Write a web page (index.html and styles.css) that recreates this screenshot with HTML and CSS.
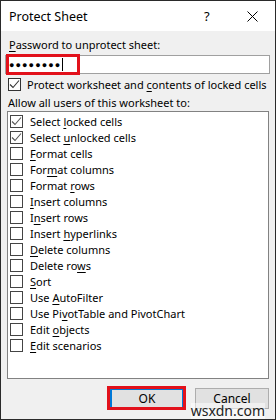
FILE: index.html
```html
<!DOCTYPE html>
<html lang="en">
<head>
    <meta charset="UTF-8">
    <title>Protect Sheet</title>
    <link rel="stylesheet" href="styles.css">
</head>
<body>
    <div class="dialog">
        <div class="titlebar">
            <span class="title">Protect Sheet</span>
            <span class="help">?</span>
            <svg class="close" width="11" height="11" viewBox="0 0 11 11">
                <path d="M0.5 0.5 L10.5 10.5 M10.5 0.5 L0.5 10.5" stroke="#000" stroke-width="1" fill="none"/>
            </svg>
        </div>

        <div class="content">
            <div class="label"><u>P</u>assword to unprotect sheet:</div>
            <div class="password">
                <span class="dots">●●●●●●●●</span><span class="caret"></span>
                <div class="mark mark-pass"></div>
            </div>

            <div class="check-row">
                <span class="box checked">
                    <svg width="11" height="11" viewBox="0 0 11 11"><path d="M1 5.5 L4 8.5 L10 1.5" stroke="#333" stroke-width="1.1" fill="none"/></svg>
                </span>
                <span>Protect worksheet and <u>c</u>ontents of locked cells</span>
            </div>

            <div class="label allow">Allow all users of this worksheet to:</div>

            <div class="list">
                <div class="check-row"><span class="box checked"><svg width="11" height="11" viewBox="0 0 11 11"><path d="M1 5.5 L4 8.5 L10 1.5" stroke="#555" stroke-width="1.1" fill="none"/></svg></span><span>Select <u>l</u>ocked cells</span></div>
                <div class="check-row"><span class="box checked"><svg width="11" height="11" viewBox="0 0 11 11"><path d="M1 5.5 L4 8.5 L10 1.5" stroke="#555" stroke-width="1.1" fill="none"/></svg></span><span>Select <u>u</u>nlocked cells</span></div>
                <div class="check-row"><span class="box"></span><span><u>F</u>ormat cells</span></div>
                <div class="check-row"><span class="box"></span><span>For<u>m</u>at columns</span></div>
                <div class="check-row"><span class="box"></span><span>Format <u>r</u>ows</span></div>
                <div class="check-row"><span class="box"></span><span><u>I</u>nsert columns</span></div>
                <div class="check-row"><span class="box"></span><span>I<u>n</u>sert rows</span></div>
                <div class="check-row"><span class="box"></span><span>Insert <u>h</u>yperlinks</span></div>
                <div class="check-row"><span class="box"></span><span><u>D</u>elete columns</span></div>
                <div class="check-row"><span class="box"></span><span>Delete ro<u>w</u>s</span></div>
                <div class="check-row"><span class="box"></span><span><u>S</u>ort</span></div>
                <div class="check-row"><span class="box"></span><span>Use <u>A</u>utoFilter</span></div>
                <div class="check-row"><span class="box"></span><span>Use Pi<u>v</u>otTable and PivotChart</span></div>
                <div class="check-row"><span class="box"></span><span>Edit <u>o</u>bjects</span></div>
                <div class="check-row"><span class="box"></span><span><u>E</u>dit scenarios</span></div>
            </div>

            <div class="buttons">
                <div class="btn-wrap">
                    <button class="btn default">OK</button>
                    <div class="mark mark-ok"></div>
                </div>
                <button class="btn">Cancel</button>
            </div>
        </div>
        <div class="watermark">wsxdn.com</div>
    </div>
</body>
</html>
```

FILE: styles.css
```css
body {
    margin: 0;
    font-family: "Noto Sans", "Open Sans", sans-serif;
    font-size: 11px;
    color: #000;
}
u {
    text-decoration-thickness: 1px;
    text-underline-offset: 2px;
}
.dialog {
    position: relative;
    width: 276px;
    height: 420px;
    box-sizing: border-box;
    border: 1px solid #2a2a2a;
    background: #f0f0f0;
    display: flex;
    flex-direction: column;
}
.titlebar {
    height: 30px;
    background: #fff;
    display: flex;
    align-items: center;
    padding-left: 8px;
}
.title {
    flex: 1;
    font-size: 12.5px;
}
.help {
    width: 20px;
    font-size: 13px;
    margin-right: 23px;
}
.close {
    margin-right: 17px;
}
.content {
    padding: 0 6px;
    display: flex;
    flex-direction: column;
}
.label {
    height: 16px;
    line-height: 16px;
    margin-top: 6px;
    padding-left: 2px;
}
.password {
    position: relative;
    margin: 2px -1px 0 -2px;
    height: 17px;
    border: 1px solid #a0a0a0;
    background: #fff;
    display: flex;
    align-items: center;
    padding-left: 3px;
}
.dots {
    font-size: 9px;
    letter-spacing: 1.1px;
}
.caret {
    width: 1px;
    height: 13px;
    background: #000;
    margin-left: 1px;
}
.mark {
    position: absolute;
    border: 3px solid #e2111b;
    box-sizing: border-box;
}
.mark-pass {
    left: 0;
    top: -2px;
    width: 74px;
    height: 21px;
}
.check-row {
    height: 16px;
    display: flex;
    align-items: center;
    gap: 6px;
    white-space: nowrap;
}
.content > .check-row {
    margin-top: 2px;
    padding-left: 1px;
}
.box {
    width: 11px;
    height: 11px;
    border: 1px solid #333;
    background: #fff;
    display: flex;
    flex-shrink: 0;
}
.allow {
    margin-top: 3px;
    padding-left: 1px;
}
.list {
    height: 268px;
    border: 1px solid #828282;
    background: #fff;
    padding: 1px 1px 0;
    box-sizing: border-box;
}
.list .check-row {
    gap: 7px;
    padding-left: 1px;
}
.list .box {
    border-color: #444;
}
.buttons {
    display: flex;
    justify-content: flex-end;
    gap: 11px;
    margin-top: 9px;
}
.btn-wrap {
    position: relative;
}
.btn {
    width: 74px;
    height: 21px;
    font-family: inherit;
    font-size: 12px;
    background: #e1e1e1;
    border: 1px solid #adadad;
    padding: 0;
    margin: 0;
}
.btn.default {
    border: 2px solid #0078d7;
}
.mark-ok {
    left: -3px;
    top: -2px;
    width: 79px;
    height: 24px;
}
.watermark {
    position: absolute;
    right: 10px;
    bottom: 0;
    font-size: 14px;
    line-height: 16px;
    color: #222;
    background: rgba(255, 255, 255, 0.5);
}
```
